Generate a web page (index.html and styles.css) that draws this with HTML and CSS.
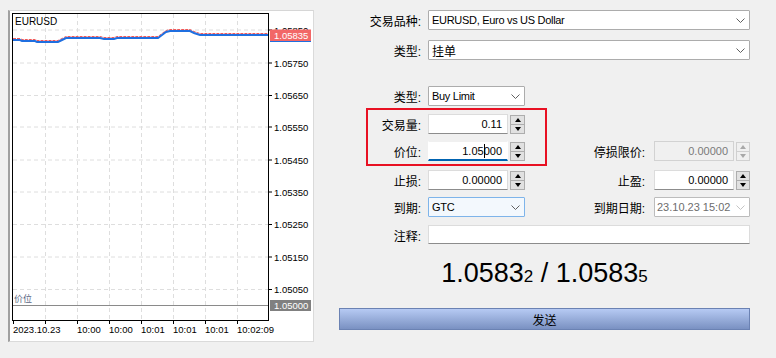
FILE: index.html
```html
<!DOCTYPE html>
<html lang="zh">
<head>
<meta charset="utf-8">
<title>Order</title>
<link rel="stylesheet" href="styles.css">
</head>
<body>
<div class="window">
  <div class="chart-panel">
    <svg class="chart" width="303" height="330" viewBox="10 11 303 330" xmlns="http://www.w3.org/2000/svg">
      <g class="grid">
        <line x1="13" y1="30" x2="268" y2="30"/>
        <line x1="13" y1="63" x2="268" y2="63"/>
        <line x1="13" y1="95.5" x2="268" y2="95.5"/>
        <line x1="13" y1="127" x2="268" y2="127"/>
        <line x1="13" y1="160" x2="268" y2="160"/>
        <line x1="13" y1="192" x2="268" y2="192"/>
        <line x1="13" y1="224.5" x2="268" y2="224.5"/>
        <line x1="13" y1="257" x2="268" y2="257"/>
        <line x1="13" y1="289.5" x2="268" y2="289.5"/>
        <line x1="45.5" y1="14" x2="45.5" y2="320"/>
        <line x1="77.5" y1="14" x2="77.5" y2="320"/>
        <line x1="109.5" y1="14" x2="109.5" y2="320"/>
        <line x1="141.5" y1="14" x2="141.5" y2="320"/>
        <line x1="173.5" y1="14" x2="173.5" y2="320"/>
        <line x1="205.5" y1="14" x2="205.5" y2="320"/>
        <line x1="237.5" y1="14" x2="237.5" y2="320"/>
      </g>
      <line class="level" x1="13" y1="305.5" x2="268" y2="305.5"/>
      <polyline class="ask" points="13,38.5 20,38.5 22,39.5 35,39.5 37,40.5 58,40.5 62,38.5 66,36.5 100,36.5 104,37.5 114,37.5 117,36.5 158,36.5 162,33.5 166,30.5 170,29.5 190,29.5 194,31.5 200,33.5 268,33.5"/>
      <polyline class="bid" points="13,40 20,40 22,41 35,41 37,42 58,42 62,40 66,38 100,38 104,39 114,39 117,38 158,38 162,35 166,32 170,31 190,31 194,33 200,35 268,35"/>
      <rect class="frame" x="12.5" y="13.5" width="256" height="307"/>
      <g class="ticks">
        <line x1="268" y1="30" x2="272" y2="30"/>
        <line x1="268" y1="63" x2="272" y2="63"/>
        <line x1="268" y1="95.5" x2="272" y2="95.5"/>
        <line x1="268" y1="127" x2="272" y2="127"/>
        <line x1="268" y1="160" x2="272" y2="160"/>
        <line x1="268" y1="192" x2="272" y2="192"/>
        <line x1="268" y1="224.5" x2="272" y2="224.5"/>
        <line x1="268" y1="257" x2="272" y2="257"/>
        <line x1="268" y1="289.5" x2="272" y2="289.5"/>
        <line x1="13.5" y1="320" x2="13.5" y2="324"/>
        <line x1="45.5" y1="320" x2="45.5" y2="324"/>
        <line x1="77.5" y1="320" x2="77.5" y2="324"/>
        <line x1="109.5" y1="320" x2="109.5" y2="324"/>
        <line x1="141.5" y1="320" x2="141.5" y2="324"/>
        <line x1="173.5" y1="320" x2="173.5" y2="324"/>
        <line x1="205.5" y1="320" x2="205.5" y2="324"/>
        <line x1="237.5" y1="320" x2="237.5" y2="324"/>
      </g>
      <g class="axis-text">
        <text x="274" y="33.5">1.05850</text>
        <text x="274" y="66.5">1.05750</text>
        <text x="274" y="99">1.05650</text>
        <text x="274" y="130.5">1.05550</text>
        <text x="274" y="163.5">1.05450</text>
        <text x="274" y="195.5">1.05350</text>
        <text x="274" y="228">1.05250</text>
        <text x="274" y="260.5">1.05150</text>
        <text x="274" y="293">1.05050</text>
        <text x="13" y="333">2023.10.23</text>
        <text x="77" y="333">10:00</text>
        <text x="109" y="333">10:00</text>
        <text x="141" y="333">10:01</text>
        <text x="173" y="333">10:01</text>
        <text x="205" y="333">10:01</text>
        <text x="237" y="333">10:02:09</text>
      </g>
      <rect class="tag-ask" x="270" y="29.5" width="41" height="11.5"/>
      <line class="tag-bid" x1="270" y1="41.5" x2="311" y2="41.5"/>
      <text class="tag-text" x="274" y="38.5">1.05835</text>
      <rect class="tag-level" x="270" y="300" width="41" height="11"/>
      <text class="tag-text" x="274" y="309">1.05000</text>
      <text class="symbol" x="15" y="25">EURUSD</text>
      <text class="level-name" x="14" y="302">价位</text>
    </svg>
  </div>

  <div class="order">
    <div class="form">
      <div class="lbl">交易品种:</div>
      <div class="select span3"><span class="val">EURUSD, Euro vs US Dollar</span><svg class="chev" width="9" height="5" viewBox="0 0 9 5"><polyline points="0.5,0.5 4.5,4.5 8.5,0.5"/></svg></div>

      <div class="lbl">类型:</div>
      <div class="select span3"><span class="val cjk">挂单</span><svg class="chev" width="9" height="5" viewBox="0 0 9 5"><polyline points="0.5,0.5 4.5,4.5 8.5,0.5"/></svg></div>

      <div class="lbl">类型:</div>
      <div class="select"><span class="val">Buy Limit</span><svg class="chev" width="9" height="5" viewBox="0 0 9 5"><polyline points="0.5,0.5 4.5,4.5 8.5,0.5"/></svg></div>
      <div class="blank span2"></div>

      <div class="lbl">交易量:</div>
      <div class="spin-field"><div class="input">0.11</div><div class="spin"><span class="up"></span><span class="down"></span></div></div>
      <div class="blank span2"></div>

      <div class="lbl">价位:</div>
      <div class="spin-field"><div class="input focused">1.05<span class="caret"></span>000</div><div class="spin"><span class="up"></span><span class="down"></span></div></div>
      <div class="lbl lbl2">停损限价:</div>
      <div class="spin-field"><div class="input disabled">0.00000</div><div class="spin off"><span class="up"></span><span class="down"></span></div></div>

      <div class="lbl">止损:</div>
      <div class="spin-field"><div class="input">0.00000</div><div class="spin"><span class="up"></span><span class="down"></span></div></div>
      <div class="lbl lbl2">止盈:</div>
      <div class="spin-field"><div class="input">0.00000</div><div class="spin"><span class="up"></span><span class="down"></span></div></div>

      <div class="lbl">到期:</div>
      <div class="select hot"><span class="val">GTC</span><svg class="chev" width="9" height="5" viewBox="0 0 9 5"><polyline points="0.5,0.5 4.5,4.5 8.5,0.5"/></svg></div>
      <div class="lbl lbl2">到期日期:</div>
      <div class="select disabled"><span class="val">23.10.23 15:02</span><svg class="chev" width="9" height="5" viewBox="0 0 9 5"><polyline points="0.5,0.5 4.5,4.5 8.5,0.5"/></svg></div>

      <div class="lbl">注释:</div>
      <div class="input comment span3"></div>
    </div>

    <div class="quote">1.0583<span class="pip">2</span> / 1.0583<span class="pip">5</span></div>

    <button class="send" type="button">发送</button>

    <div class="highlight"></div>
  </div>
</div>
</body>
</html>
```

FILE: styles.css
```css
html, body {
  margin: 0;
  padding: 0;
}
body {
  background: #f0f0f0;
  width: 776px;
  height: 358px;
  overflow: hidden;
  font-family: "Liberation Sans", "Noto Sans CJK SC", sans-serif;
  font-size: 11px;
  color: #000;
}
.window {
  display: flex;
  align-items: flex-start;
}

/* ---------- chart ---------- */
.chart-panel {
  margin: 10px 0 0 8px;
  background: #fff;
  border-top: 1px solid #d6d6d6;
  border-left: 2px solid #a0a0a0;
  border-right: 1px solid #dadada;
  border-bottom: 1px solid #dadada;
  width: 303px;
  height: 330px;
}
.chart {
  display: block;
}
.grid line {
  stroke: #dedede;
  stroke-width: 1;
  stroke-dasharray: 4 3;
}
.frame {
  fill: none;
  stroke: #000;
  stroke-width: 1;
}
.ticks line {
  stroke: #000;
  stroke-width: 1;
}
.axis-text text {
  font-family: "Liberation Sans", sans-serif;
  font-size: 9.5px;
  fill: #000;
}
.level {
  stroke: #8a8a8a;
  stroke-width: 1;
}
.ask {
  fill: none;
  stroke: #f05a5a;
  stroke-width: 1;
  stroke-dasharray: 3 1;
}
.bid {
  fill: none;
  stroke: #1f6fe0;
  stroke-width: 2;
}
.tag-ask {
  fill: #f26767;
}
.tag-bid {
  stroke: #1f6fe0;
  stroke-width: 1;
}
.tag-level {
  fill: #808080;
}
.tag-text {
  font-family: "Liberation Sans", sans-serif;
  font-size: 9.5px;
  fill: #fff;
}
.symbol {
  font-family: "Liberation Sans", sans-serif;
  font-size: 10px;
  fill: #000;
}
.level-name {
  font-family: "Noto Sans CJK SC", sans-serif;
  font-size: 9px;
  fill: #5a6684;
}

/* ---------- order form ---------- */
.order {
  position: relative;
  margin-left: 25px;
  width: 411px;
  padding-top: 10px;
}
.form {
  display: grid;
  grid-template-columns: 89px 97px 129px 96px;
  grid-template-rows: 30px 46px 28px 27px 29px 27px 28px 20px;
  align-items: start;
}
.span3 { grid-column: span 3; }
.span2 { grid-column: span 2; }
.lbl {
  height: 20px;
  display: flex;
  align-items: center;
  justify-content: flex-end;
  padding-right: 7px;
  font-size: 12px;
  white-space: nowrap;
}
.lbl2 {
  padding-right: 9px;
}
.select {
  box-sizing: border-box;
  height: 20px;
  display: flex;
  align-items: center;
  justify-content: space-between;
  background: #fff;
  border: 1px solid #acacac;
  border-radius: 1px;
  padding: 0 4px 0 3px;
  letter-spacing: -0.3px;
}
.select .val {
  white-space: nowrap;
}
.select .cjk {
  font-size: 12px;
  letter-spacing: 0;
}
.chev polyline {
  fill: none;
  stroke: #606060;
  stroke-width: 1;
}
.select.hot {
  background: #f3f8fd;
  border-color: #7eb4ea;
}
.select.disabled {
  background: #fff;
  border-color: #bcbcbc;
  color: #6d6d6d;
  letter-spacing: 0;
  padding-left: 2px;
}
.select.disabled .chev polyline {
  stroke: #c4c4c4;
}
.spin-field {
  display: flex;
  height: 20px;
}
.input {
  box-sizing: border-box;
  flex: 0 0 80px;
  height: 20px;
  display: flex;
  align-items: center;
  justify-content: flex-end;
  padding-right: 5px;
  background: #fff;
  border: 1px solid #dcdcdc;
  border-bottom-color: #8c8c8c;
}
.input.focused {
  border-color: #f0f0f0 #fff #0063b1 #fff;
  border-bottom-width: 2px;
}
.input.disabled {
  background: #f0f0f0;
  border-color: #d2d2d2;
  color: #7a7a7a;
}
.input.comment {
  justify-content: flex-start;
  height: 19px;
}
.caret {
  display: inline-block;
  width: 1px;
  height: 14px;
  background: #000;
  margin-right: -1px;
}
.spin {
  flex: 1;
  margin-left: 2px;
  display: flex;
  flex-direction: column;
  box-sizing: border-box;
  height: 19px;
  margin-top: 1px;
  border: 1px solid #adadad;
  background: #e1e1e1;
}
.spin span {
  flex: 1;
  display: flex;
  align-items: center;
  justify-content: center;
}
.spin .up {
  border-bottom: 1px solid #adadad;
}
.spin .up::before {
  content: "";
  border-left: 3.5px solid transparent;
  border-right: 3.5px solid transparent;
  border-bottom: 4px solid #000;
}
.spin .down::before {
  content: "";
  border-left: 3.5px solid transparent;
  border-right: 3.5px solid transparent;
  border-top: 4px solid #000;
}
.spin.off {
  border-color: #d0d0d0;
  background: #f0f0f0;
}
.spin.off .up {
  border-bottom-color: #d0d0d0;
}
.spin.off .up::before {
  border-bottom-color: #a8a8a8;
}
.spin.off .down::before {
  border-top-color: #a8a8a8;
}

.quote {
  margin-top: 13px;
  height: 31px;
  line-height: 31px;
  text-align: center;
  font-size: 27px;
  white-space: nowrap;
}
.quote .pip {
  font-size: 17px;
}
.send {
  display: block;
  margin-top: 19px;
  width: 411px;
  height: 22px;
  padding: 0;
  border: 1px solid #6b82b3;
  background: linear-gradient(#b6caf3, #7a91c2);
  font-family: "Noto Sans CJK SC", sans-serif;
  font-size: 12px;
  color: #000;
}
.highlight {
  position: absolute;
  left: 27px;
  top: 108px;
  width: 181px;
  height: 58px;
  box-sizing: border-box;
  border: 2px solid #e81123;
  pointer-events: none;
}
```
